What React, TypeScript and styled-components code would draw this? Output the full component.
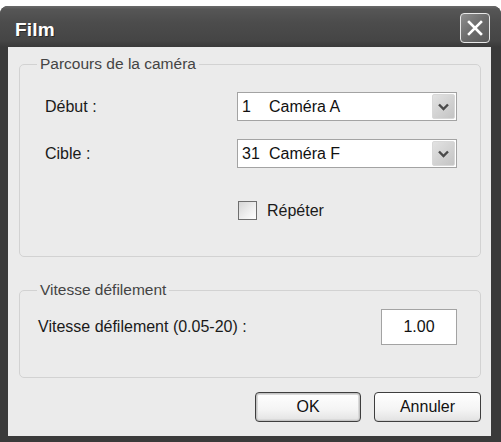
import styled, { createGlobalStyle } from 'styled-components'

const Global = createGlobalStyle`
  html, body {
    margin: 0;
    padding: 0;
    background: #ffffff;
  }
  body {
    font-family: 'Liberation Sans', Arial, sans-serif;
  }
`

const Window = styled.div`
  width: 501px;
  height: 436px;
  margin-top: 6px;
  display: flex;
  flex-direction: column;
  background: #3a3a3a;
  border-radius: 8px 8px 0 0;
  box-sizing: border-box;
  overflow: hidden;
`

const TitleBar = styled.div`
  height: 41px;
  flex: none;
  display: flex;
  align-items: center;
  justify-content: space-between;
  padding: 0 11px 0 15px;
  background: linear-gradient(#6a6a6a 0%, #565656 8%, #4c4c4c 40%, #454545 85%, #3a3a3a 100%);
`

const Title = styled.span`
  color: #ffffff;
  font-weight: bold;
  font-size: 19px;
  letter-spacing: 0.2px;
  text-shadow: 1px 1px 0 #2a2a2a;
  margin-top: 6px;
`

const CloseButton = styled.div`
  width: 30px;
  height: 30px;
  margin-top: 3px;
  box-sizing: border-box;
  border: 1px solid #e8e8e8;
  border-radius: 4px;
  background: linear-gradient(135deg, #8e8e8e 0%, #6c6c6c 50%, #5a5a5a 100%);
  display: flex;
  align-items: center;
  justify-content: center;
`

const Client = styled.div`
  flex: 1;
  margin: 0 10px 6px 8px;
  background: #ebebeb;
  padding: 8px 10px 0 11px;
  display: flex;
  flex-direction: column;
`

const Group = styled.fieldset<{ $gapTop?: number }>`
  margin: ${(p) => p.$gapTop ?? 0}px 0 0 0;
  padding: 0;
  border: 1px solid #d2d2d2;
  border-radius: 5px;
  min-width: 0;
`

const Legend = styled.legend`
  margin-left: 17px;
  padding: 0 3px;
  font-size: 15.5px;
  line-height: 18px;
  color: #444444;
`

const FormGrid = styled.div`
  display: grid;
  grid-template-columns: 192px 220px;
  padding: 19px 25px 31px 25px;
  row-gap: 18px;
  align-items: center;
`

const Label = styled.span`
  font-size: 16px;
  color: #1a1a1a;
`

const Combo = styled.div`
  height: 29px;
  box-sizing: border-box;
  border: 1px solid #a3a3a3;
  background: #ffffff;
  display: flex;
  align-items: center;
  padding: 0 1px 0 4px;
  font-size: 16px;
  color: #111;
`

const ComboNum = styled.span`
  width: 27px;
`

const ComboText = styled.span`
  flex: 1;
`

const ComboArrow = styled.div`
  width: 23px;
  height: 25px;
  box-sizing: border-box;
  border: 1px solid #d8d8d8;
  border-radius: 2px;
  background: linear-gradient(135deg, #e2e2e2 0%, #d0d0d0 60%, #c4c4c4 100%);
  display: flex;
  align-items: center;
  justify-content: center;
`

const CheckRow = styled.div`
  grid-column: 2;
  height: 29px;
  margin-top: 10px;
  display: flex;
  align-items: center;
  gap: 10px;
  padding-left: 1px;
`

const CheckBox = styled.div`
  width: 19px;
  height: 19px;
  box-sizing: border-box;
  border: 1px solid #6e6e6e;
  background: linear-gradient(135deg, #d6d6d6 0%, #f0f0f0 60%, #ffffff 100%);
`

const SpeedRow = styled.div`
  display: flex;
  align-items: center;
  justify-content: space-between;
  padding: 10px 23px 32px 18px;
`

const NumberInput = styled.div`
  width: 76px;
  height: 36px;
  box-sizing: border-box;
  border: 1px solid #a3a3a3;
  background: #ffffff;
  display: flex;
  align-items: center;
  justify-content: center;
  font-size: 16px;
  color: #111;
`

const ButtonRow = styled.div`
  display: flex;
  justify-content: flex-end;
  gap: 13px;
  margin-top: 14px;
`

const Button = styled.div<{ $width: number; $default?: boolean }>`
  width: ${(p) => p.$width}px;
  height: 30px;
  box-sizing: border-box;
  border: 1px solid #3e3e3e;
  border-radius: 4px;
  background: linear-gradient(#ffffff 0%, #f4f4f4 60%, #e2e2e2 100%);
  box-shadow: ${(p) => (p.$default ? 'inset 0 0 0 1px #c4c4c4, inset 0 0 0 2px #dadada' : 'inset 0 -1px 0 #d0d0d0')};
  display: flex;
  align-items: center;
  justify-content: center;
  font-size: 16px;
  color: #111;
`

function Chevron() {
  return (
    <svg width='11' height='8' viewBox='0 0 11 8'>
      <path d='M1 1.5 L5.5 6 L10 1.5' fill='none' stroke='#4a4a4a' strokeWidth='2.4' />
    </svg>
  )
}

export default function App() {
  return (
    <>
      <Global />
      <Window>
        <TitleBar>
          <Title>Film</Title>
          <CloseButton>
            <svg width='18' height='18' viewBox='0 0 18 18'>
              <path d='M3 3 L15 15 M15 3 L3 15' stroke='#ffffff' strokeWidth='2.6' strokeLinecap='square' />
            </svg>
          </CloseButton>
        </TitleBar>
        <Client>
          <Group>
            <Legend>Parcours de la caméra</Legend>
            <FormGrid>
              <Label>Début :</Label>
              <Combo>
                <ComboNum>1</ComboNum>
                <ComboText>Caméra A</ComboText>
                <ComboArrow>
                  <Chevron />
                </ComboArrow>
              </Combo>
              <Label>Cible :</Label>
              <Combo>
                <ComboNum>31</ComboNum>
                <ComboText>Caméra F</ComboText>
                <ComboArrow>
                  <Chevron />
                </ComboArrow>
              </Combo>
              <CheckRow>
                <CheckBox />
                <Label>Répéter</Label>
              </CheckRow>
            </FormGrid>
          </Group>
          <Group $gapTop={24}>
            <Legend>Vitesse défilement</Legend>
            <SpeedRow>
              <Label>Vitesse défilement (0.05-20) :</Label>
              <NumberInput>1.00</NumberInput>
            </SpeedRow>
          </Group>
          <ButtonRow>
            <Button $width={106} $default>OK</Button>
            <Button $width={107}>Annuler</Button>
          </ButtonRow>
        </Client>
      </Window>
    </>
  )
}
